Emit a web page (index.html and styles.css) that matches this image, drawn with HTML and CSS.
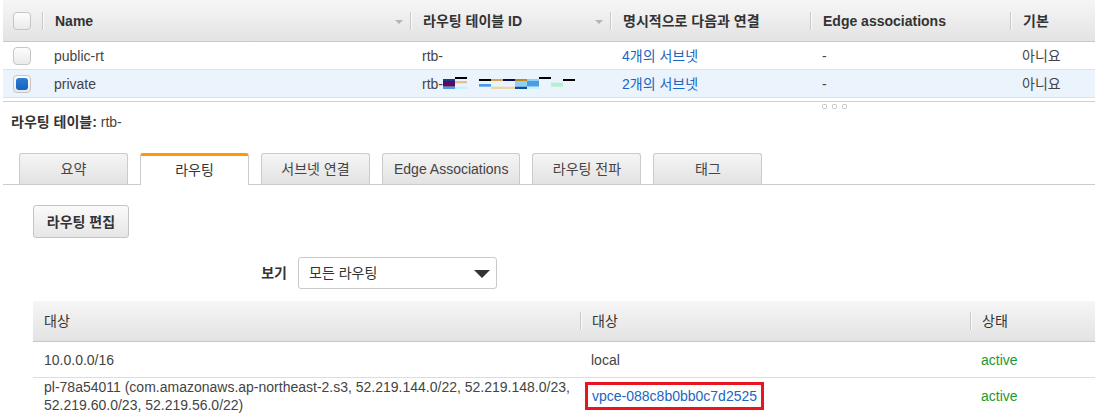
FILE: index.html
```html
<!DOCTYPE html>
<html lang="ko">
<head>
<meta charset="utf-8">
<title>라우팅 테이블</title>
<link rel="stylesheet" href="styles.css">
</head>
<body>
<div class="page">
  <div class="rt-grid">
    <div class="rt-head">
      <div class="cell"><span class="cb"></span></div>
      <div class="cell hcell"><span class="sep"></span><span class="ht">Name</span><span class="sort"></span></div>
      <div class="cell hcell"><span class="sep"></span><span class="ht">라우팅 테이블 ID</span><span class="sort"></span></div>
      <div class="cell hcell"><span class="sep"></span><span class="ht">명시적으로 다음과 연결</span></div>
      <div class="cell hcell"><span class="sep"></span><span class="ht">Edge associations</span></div>
      <div class="cell hcell"><span class="sep"></span><span class="ht">기본</span></div>
    </div>
    <div class="rt-row">
      <div class="cell"><span class="cb"></span></div>
      <div class="cell dcell">public-rt</div>
      <div class="cell dcell">rtb-</div>
      <div class="cell dcell"><a class="link">4개의 서브넷</a></div>
      <div class="cell dcell">-</div>
      <div class="cell dcell">아니요</div>
    </div>
    <div class="rt-row sel">
      <div class="cell"><span class="cb on"><span class="dot"></span></span></div>
      <div class="cell dcell">private</div>
      <div class="cell dcell">rtb-<svg class="redact" width="132" height="12" viewBox="0 0 132 12">
        <rect x="0" y="2" width="12" height="2" fill="#1b3a8c"/>
        <rect x="0" y="4" width="12" height="5.7" fill="#5b0b5e"/>
        <rect x="0" y="9.7" width="12" height="2.3" fill="#4a9de3"/>
        <rect x="12" y="0" width="12" height="2" fill="#000"/>
        <rect x="12" y="4" width="12" height="2.3" fill="#e6c18f"/>
        <rect x="12" y="9.7" width="12" height="2.3" fill="#c6f3fb"/>
        <rect x="36" y="2" width="12" height="2" fill="#000"/>
        <rect x="36" y="7" width="12" height="2.7" fill="#4a9de3"/>
        <rect x="48" y="2" width="12" height="2" fill="#d4a25f"/>
        <rect x="48" y="9.7" width="12" height="2.3" fill="#ead7a7"/>
        <rect x="60" y="2" width="12" height="2" fill="#0a0a5a"/>
        <rect x="60" y="9.7" width="12" height="2.3" fill="#ead7a7"/>
        <rect x="72" y="2" width="12" height="2" fill="#b8871d"/>
        <rect x="72" y="4" width="12" height="5.7" fill="#92cff6"/>
        <rect x="72" y="9.7" width="12" height="2.3" fill="#0b4fa0"/>
        <rect x="84" y="2" width="12" height="2" fill="#92cff6"/>
        <rect x="84" y="4" width="12" height="5.7" fill="#4a9de3"/>
        <rect x="84" y="9.7" width="12" height="2.3" fill="#c6f3fb"/>
        <rect x="96" y="0" width="12" height="2" fill="#000"/>
        <rect x="108" y="5.7" width="12" height="4" fill="#b3f2d0"/>
        <rect x="120" y="2" width="12" height="2" fill="#000"/>
      </svg></div>
      <div class="cell dcell"><a class="link">2개의 서브넷</a></div>
      <div class="cell dcell">-</div>
      <div class="cell dcell">아니요</div>
    </div>
  </div>

  <div class="resizer">
    <svg class="grip" width="26" height="5" viewBox="0 0 26 5">
      <rect x="0.5" y="0.5" width="4" height="4" rx="1" fill="none" stroke="#c4c4c4"/>
      <rect x="10.5" y="0.5" width="4" height="4" rx="1" fill="none" stroke="#c4c4c4"/>
      <rect x="20.5" y="0.5" width="4" height="4" rx="1" fill="none" stroke="#c4c4c4"/>
    </svg>
  </div>

  <div class="summary"><b>라우팅 테이블:</b> rtb-</div>

  <div class="tabs">
    <div class="tab">요약</div>
    <div class="tab active">라우팅</div>
    <div class="tab">서브넷 연결</div>
    <div class="tab">Edge Associations</div>
    <div class="tab">라우팅 전파</div>
    <div class="tab">태그</div>
  </div>

  <div class="content">
    <button class="btn">라우팅 편집</button>

    <div class="view">
      <label class="view-label">보기</label>
      <div class="select"><span>모든 라우팅</span><span class="caret"></span></div>
    </div>

    <div class="routes">
      <div class="r-head">
        <div class="cell r1"><span class="ht">대상</span></div>
        <div class="cell"><span class="sep"></span><span class="ht">대상</span></div>
        <div class="cell"><span class="sep"></span><span class="ht">상태</span></div>
      </div>
      <div class="r-row">
        <div class="cell rd">10.0.0.0/16</div>
        <div class="cell rd">local</div>
        <div class="cell rd ok">active</div>
      </div>
      <div class="r-row tall">
        <div class="cell rd nowrap">pl-78a54011 (com.amazonaws.ap-northeast-2.s3, 52.219.144.0/22, 52.219.148.0/23,<br>52.219.60.0/23, 52.219.56.0/22)</div>
        <div class="cell rd"><span class="mark"><a class="link">vpce-088c8b0bb0c7d2525</a></span></div>
        <div class="cell rd ok">active</div>
      </div>
    </div>
  </div>
</div>
</body>
</html>
```

FILE: styles.css
```css
html, body {
  margin: 0;
  padding: 0;
  background: #fff;
}
body {
  font-family: "Liberation Sans", "Noto Sans CJK KR", sans-serif;
  font-size: 14px;
  line-height: 18px;
  color: #444;
}
.page {
  padding-left: 3px;
  width: 1092px;
  overflow: hidden;
}

/* top grid */
.rt-head,
.rt-row {
  display: grid;
  grid-template-columns: 39px 368px 200px 200px 200px 1fr;
  box-sizing: border-box;
}
.rt-head {
  height: 42px;
  background: linear-gradient(#f6f6f6, #e3e3e3);
  border-bottom: 1px solid #c8c8c8;
  font-weight: bold;
  color: #333;
}
.rt-row {
  height: 28px;
  border-bottom: 1px solid #dde2e8;
}
.rt-row.sel {
  background: #ebf3fd;
}
.cell {
  display: flex;
  align-items: center;
  white-space: nowrap;
  min-width: 0;
}
.sep {
  width: 1px;
  height: 18px;
  background: #c9c9c9;
  box-shadow: 1px 0 0 #fafafa;
  flex: none;
}
.ht {
  margin-left: 12px;
}
.sort {
  margin-left: auto;
  margin-right: 7px;
  margin-top: 2px;
  width: 0;
  height: 0;
  border-left: 4px solid transparent;
  border-right: 4px solid transparent;
  border-top: 4px solid #b3b3b3;
}
.dcell {
  padding-left: 12px;
  color: #444;
}
.cb {
  display: block;
  width: 18px;
  height: 18px;
  box-sizing: border-box;
  margin-left: 10px;
  border: 1px solid #c6c6c6;
  border-radius: 4px;
  background: linear-gradient(#fdfdfd, #eaeaea);
}
.cb.on {
  padding: 2px;
}
.dot {
  display: block;
  width: 100%;
  height: 100%;
  border-radius: 3px;
  background: linear-gradient(#2c7dd8, #1562b9);
}
.redact {
  display: block;
  margin-top: -1px;
}
.link {
  color: #1a66c2;
  text-decoration: none;
}

/* resizer */
.resizer {
  margin-top: 3px;
  border-top: 1px solid #cfcfcf;
  padding-top: 2px;
  height: 5px;
}
.grip {
  display: block;
  margin-left: 819px;
}

.summary {
  margin-top: 4px;
  padding-left: 8px;
  color: #444;
}
.summary b {
  color: #333;
}

/* tabs */
.tabs {
  display: flex;
  align-items: flex-end;
  gap: 12px;
  margin-top: 22px;
  padding-left: 16px;
  height: 31px;
  border-bottom: 1px solid #cccccc;
}
.tab {
  box-sizing: border-box;
  min-width: 109px;
  height: 31px;
  padding: 0 11px;
  display: flex;
  align-items: center;
  justify-content: center;
  border: 1px solid #cbcbcb;
  border-bottom: none;
  border-radius: 3px 3px 0 0;
  background: linear-gradient(#f5f5f5, #e2e2e2);
  color: #444;
  white-space: nowrap;
}
.tab.active {
  height: 32px;
  margin-bottom: -1px;
  border-top: 3px solid #ff9900;
  background: #fff;
  color: #333;
  padding-bottom: 1px;
}

/* content */
.content {
  padding-left: 30px;
}
.btn {
  display: block;
  margin-top: 20px;
  box-sizing: border-box;
  height: 33px;
  min-width: 96px;
  padding: 0 12px;
  border: 1px solid #c4c4c4;
  border-radius: 3px;
  background: linear-gradient(#fafafa, #e6e6e6);
  font-family: inherit;
  font-size: 14px;
  font-weight: bold;
  color: #333;
  line-height: 18px;
}
.view {
  display: flex;
  align-items: center;
  margin-top: 19px;
}
.view-label {
  width: 254px;
  text-align: right;
  font-weight: bold;
  color: #333;
}
.select {
  box-sizing: border-box;
  width: 199px;
  height: 32px;
  margin-left: 11px;
  padding: 0 6px 0 10px;
  display: flex;
  align-items: center;
  justify-content: space-between;
  border: 1px solid #c9c9c9;
  border-radius: 3px;
  background: #fff;
  color: #333;
}
.caret {
  width: 0;
  height: 0;
  margin-top: 2px;
  border-left: 8px solid transparent;
  border-right: 8px solid transparent;
  border-top: 8px solid #333;
}

/* routes table */
.routes {
  margin-top: 12px;
}
.r-head,
.r-row {
  display: grid;
  grid-template-columns: 547px 390px 1fr;
  box-sizing: border-box;
}
.r-head {
  height: 41px;
  background: linear-gradient(#f6f6f6, #e3e3e3);
  border-bottom: 1px solid #c8c8c8;
  color: #333;
}
.r-head .ht {
  margin-left: 11px;
}
.r-row {
  height: 36px;
  border-bottom: 1px solid #dddddd;
}
.r-row.tall {
  height: auto;
  border-bottom: none;
}
.rd {
  padding: 0 11px;
  color: #444;
}
.nowrap {
  white-space: nowrap;
  padding-right: 0;
}
.ok {
  color: #22992f;
}
.mark {
  display: inline-block;
  margin-left: -6px;
  padding: 2px 4px;
  border: 3px solid #e8141f;
  line-height: 18px;
}
```
